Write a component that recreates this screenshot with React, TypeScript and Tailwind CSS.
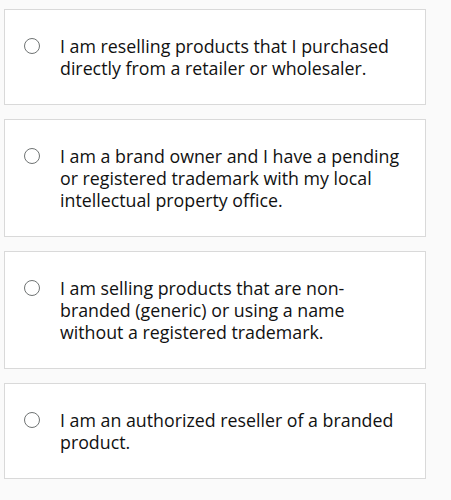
const options = [
  'I am reselling products that I purchased directly from a retailer or wholesaler.',
  'I am a brand owner and I have a pending or registered trademark with my local intellectual property office.',
  'I am selling products that are non-branded (generic) or using a name without a registered trademark.',
  'I am an authorized reseller of a branded product.',
];

export default function App() {
  return (
    <div className="min-h-[500px] w-[451px] bg-[#fafafa] pt-[9px] pl-[4px] font-['Open_Sans',sans-serif]">
      <div className="flex w-[422px] flex-col gap-[14px]" role="radiogroup">
        {options.map((text) => (
          <label
            key={text}
            className="flex items-start border border-[#d9d9d9] bg-white py-[25px] pr-[18px] pl-[19px]"
          >
            <span className="mt-[3px] h-[16px] w-[16px] shrink-0 rounded-full border border-[#6f7373] bg-white" />
            <span className="ml-[20px] text-[17.8px] leading-[22px] text-[#111]">{text}</span>
          </label>
        ))}
      </div>
    </div>
  );
}
